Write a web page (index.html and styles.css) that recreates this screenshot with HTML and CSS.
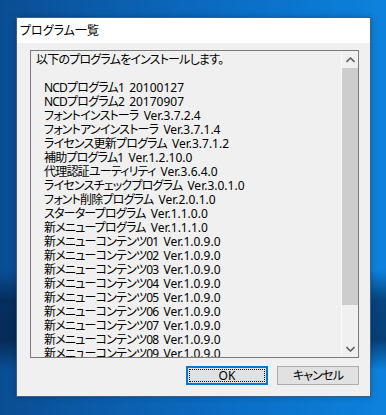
FILE: index.html
```html
<!DOCTYPE html>
<html lang="ja">
<head>
<meta charset="utf-8">
<title>プログラム一覧</title>
<link rel="stylesheet" href="styles.css">
</head>
<body>
<div class="desktop">
  <div class="window">
    <div class="titlebar">プログラム一覧</div>
    <div class="client">
      <div class="textbox">
        <div class="text">
          <div class="line"><span class="n">以下のプログラムをインストールします。</span></div>
          <div class="line">&nbsp;</div>
          <div class="line item"><span class="n">NCDプログラム1</span> <span class="v">20100127</span></div>
          <div class="line item"><span class="n">NCDプログラム2</span> <span class="v">20170907</span></div>
          <div class="line item"><span class="n">フォントインストーラ</span> <span class="v">Ver.3.7.2.4</span></div>
          <div class="line item"><span class="n">フォントアンインストーラ</span> <span class="v">Ver.3.7.1.4</span></div>
          <div class="line item"><span class="n">ライセンス更新プログラム</span> <span class="v">Ver.3.7.1.2</span></div>
          <div class="line item"><span class="n">補助プログラム1</span> <span class="v">Ver.1.2.10.0</span></div>
          <div class="line item"><span class="n">代理認証ユーティリティ</span> <span class="v">Ver.3.6.4.0</span></div>
          <div class="line item"><span class="n">ライセンスチェックプログラム</span> <span class="v">Ver.3.0.1.0</span></div>
          <div class="line item"><span class="n">フォント削除プログラム</span> <span class="v">Ver.2.0.1.0</span></div>
          <div class="line item"><span class="n">スタータープログラム</span> <span class="v">Ver.1.1.0.0</span></div>
          <div class="line item"><span class="n">新メニュープログラム</span> <span class="v">Ver.1.1.1.0</span></div>
          <div class="line item"><span class="n">新メニューコンテンツ01</span> <span class="v">Ver.1.0.9.0</span></div>
          <div class="line item"><span class="n">新メニューコンテンツ02</span> <span class="v">Ver.1.0.9.0</span></div>
          <div class="line item"><span class="n">新メニューコンテンツ03</span> <span class="v">Ver.1.0.9.0</span></div>
          <div class="line item"><span class="n">新メニューコンテンツ04</span> <span class="v">Ver.1.0.9.0</span></div>
          <div class="line item"><span class="n">新メニューコンテンツ05</span> <span class="v">Ver.1.0.9.0</span></div>
          <div class="line item"><span class="n">新メニューコンテンツ06</span> <span class="v">Ver.1.0.9.0</span></div>
          <div class="line item"><span class="n">新メニューコンテンツ07</span> <span class="v">Ver.1.0.9.0</span></div>
          <div class="line item"><span class="n">新メニューコンテンツ08</span> <span class="v">Ver.1.0.9.0</span></div>
          <div class="line item"><span class="n">新メニューコンテンツ09</span> <span class="v">Ver.1.0.9.0</span></div>
        </div>
        <div class="scrollbar">
          <div class="sb-btn">
            <svg width="9" height="6" viewBox="0 0 9 6"><path d="M0.5 5 L4.5 1 L8.5 5" fill="none" stroke="#606060" stroke-width="1.6"/></svg>
          </div>
          <div class="sb-track"><div class="sb-thumb"></div></div>
          <div class="sb-btn">
            <svg width="9" height="6" viewBox="0 0 9 6"><path d="M0.5 1 L4.5 5 L8.5 1" fill="none" stroke="#606060" stroke-width="1.6"/></svg>
          </div>
        </div>
      </div>
      <div class="buttons">
        <button class="btn default"><span class="focus">OK</span></button>
        <button class="btn"><span class="n">キャンセル</span></button>
      </div>
    </div>
  </div>
</div>
</body>
</html>
```

FILE: styles.css
```css
* { box-sizing: border-box; }
html, body {
  margin: 0;
  padding: 0;
  width: 386px;
  height: 415px;
  overflow: hidden;
}
body {
  font-family: "Noto Sans", "Noto Sans CJK JP", sans-serif;
}
.desktop {
  width: 386px;
  height: 415px;
  padding: 17px 0 0 16px;
  background:
    linear-gradient(180deg, rgba(0,0,0,0) 0px, rgba(0,0,0,0) 270px, rgba(2,20,50,0.55) 300px, rgba(2,20,50,0.6) 340px, rgba(0,0,0,0) 370px),
    linear-gradient(90deg, #0a4d93 0px, #0b5fae 120px, #0a70c8 250px, #0d82dc 386px);
}
.window {
  width: 355px;
  height: 380px;
  border: 1px solid #3f5f80;
  background: #f0f0f0;
  display: flex;
  flex-direction: column;
  box-shadow: 0 0 6px rgba(0,0,0,0.25);
}
.titlebar {
  height: 25px;
  background: #ffffff;
  font-family: "Noto Sans CJK JP", sans-serif;
  font-size: 12px;
  line-height: 23px;
  padding-left: 3px;
  color: #000;
  font-feature-settings: "palt";
}
.client {
  flex: 1;
  padding: 7px 11px 0 13px;
  display: flex;
  flex-direction: column;
}
.textbox {
  height: 308px;
  border: 1px solid #7a7a7a;
  background: #f0f0f0;
  display: flex;
  overflow: hidden;
}
.text {
  flex: 1;
  padding: 2px 0 0 5px;
  font-size: 12px;
  line-height: 14px;
  color: #000;
  white-space: nowrap;
  overflow: hidden;
  font-feature-settings: "palt";
}
.line { height: 14px; word-spacing: 2px; }
.item { padding-left: 8px; }
.n { letter-spacing: -0.8px; word-spacing: 0; }
.v { letter-spacing: 0; word-spacing: 0; }
.scrollbar {
  width: 17px;
  display: flex;
  flex-direction: column;
  background: #f0f0f0;
  border-left: 1px solid #fafafa;
}
.sb-btn {
  height: 17px;
  display: flex;
  align-items: center;
  justify-content: center;
}
.sb-track {
  flex: 1;
  padding: 0 0 35px 0;
  display: flex;
  flex-direction: column;
}
.sb-thumb {
  flex: 1;
  background: #cdcdcd;
}
.buttons {
  display: flex;
  justify-content: flex-end;
  gap: 9px;
  margin-top: 8px;
}
.btn {
  width: 82px;
  height: 19px;
  border: 1px solid #adadad;
  background: #e1e1e1;
  font-family: "Noto Sans", "Noto Sans CJK JP", sans-serif;
  font-size: 12px;
  line-height: 15px;
  color: #000;
  padding: 0;
  margin: 0;
  font-feature-settings: "palt";
}
.btn.default {
  border: 2px solid #0078d7;
  padding: 1px;
}
.focus {
  display: block;
  height: 13px;
  line-height: 12px;
  border: 1px dotted #000;
}
```
